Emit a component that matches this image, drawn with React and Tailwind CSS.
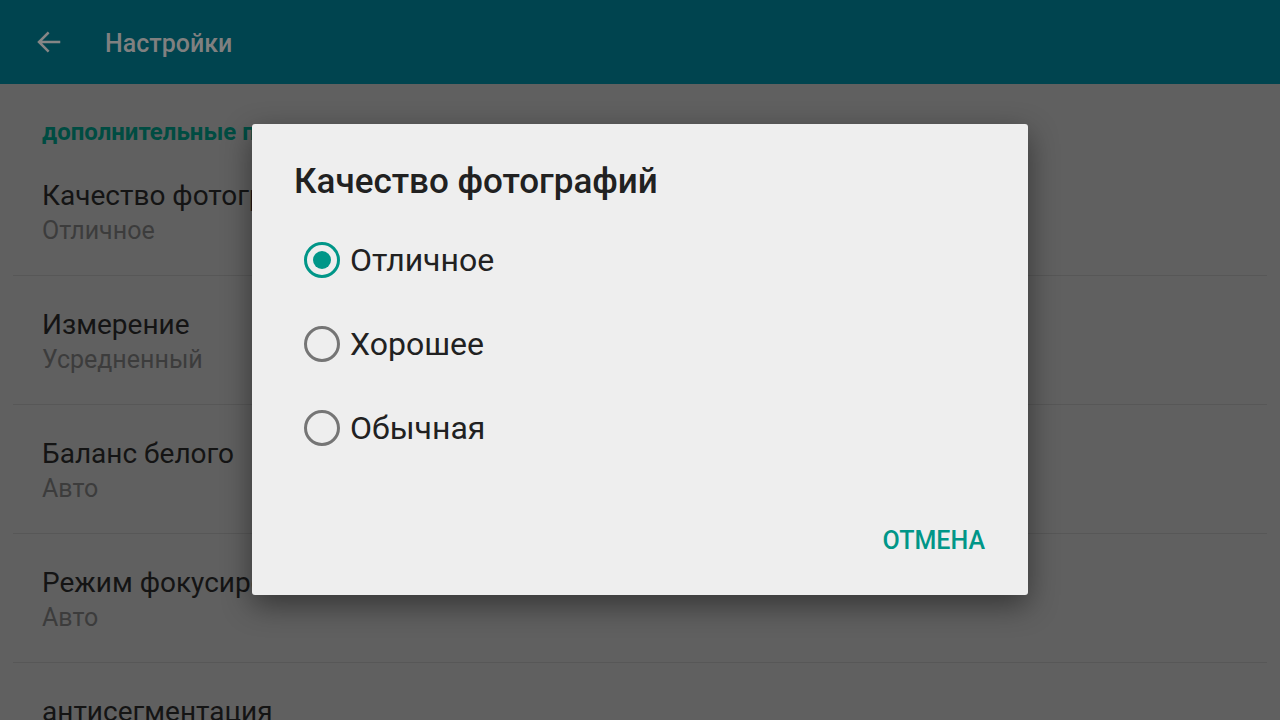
const rows = [
  { title: "Качество фотографий", value: "Отличное" },
  { title: "Измерение", value: "Усредненный" },
  { title: "Баланс белого", value: "Авто" },
  { title: "Режим фокусировки", value: "Авто" },
  { title: "антисегментация", value: "Выкл" },
];

const options = ["Отличное", "Хорошее", "Обычная"];

const Radio = ({ checked }) => (
  <span className={checked
    ? "w-[36px] h-[36px] rounded-full border-[3px] border-[#009688] flex items-center justify-center shrink-0"
    : "w-[36px] h-[36px] rounded-full border-[3px] border-[#757575] flex items-center justify-center shrink-0"}>
    {checked && <span className="w-[18px] h-[18px] rounded-full bg-[#009688]" />}
  </span>
);

export default function App() {
  return (
    <div className="relative w-[1280px] h-[720px] overflow-hidden bg-[#606060]"
      style={{ fontFamily: "Roboto, 'Noto Sans', sans-serif" }}>

      {/* Toolbar */}
      <div className="h-[84px] bg-[#00444f] flex items-center pl-[34px] pt-[3px]">
        <svg width="30" height="30" viewBox="0 0 24 24" fill="none" stroke="#868686"
          strokeWidth="2" strokeLinecap="square" className="-mt-[3px]">
          <path d="M20 12H5 M11 5l-7 7 7 7" />
        </svg>
        <span className="ml-[41px] text-[25px] font-medium text-[#808080]">Настройки</span>
      </div>

      {/* Settings list (dimmed) */}
      <div className="pt-[33px]">
        <div className="px-[42px] text-[24px] leading-[30px] font-bold text-[#004c42]">
          дополнительные параметры
        </div>
        {rows.map((r, i) => (
          <div key={r.title}>
            {i > 0 && <div className="mx-[13px] h-px bg-[#575757]" />}
            <div className="px-[42px] pt-[31px] pb-[27px]">
              <div className="text-[28px] leading-[36px] text-[#141414]">{r.title}</div>
              <div className="text-[25px] leading-[34px] text-[#3c3c3c]">{r.value}</div>
            </div>
          </div>
        ))}
      </div>

      {/* Dialog */}
      <div className="absolute left-[252px] top-[124px] w-[776px] h-[471px] bg-[#eeeeee] rounded-[3px] shadow-[0_10px_30px_rgba(0,0,0,0.45)] flex flex-col">
        <div className="pl-[42px] pt-[37px] text-[35px] leading-[42px] font-medium text-[#212121]">
          Качество фотографий
        </div>
        <div className="mt-[15px] flex flex-col">
          {options.map((o, i) => (
            <div key={o} className="h-[84px] flex items-center pl-[52px] gap-[10px]">
              <Radio checked={i === 0} />
              <span className="text-[32px] text-[#212121]">{o}</span>
            </div>
          ))}
        </div>
        <div className="mt-auto pb-[40px] pr-[43px] flex justify-end">
          <span className="text-[25px] leading-[28px] font-medium text-[#009688]">ОТМЕНА</span>
        </div>
      </div>
    </div>
  );
}
